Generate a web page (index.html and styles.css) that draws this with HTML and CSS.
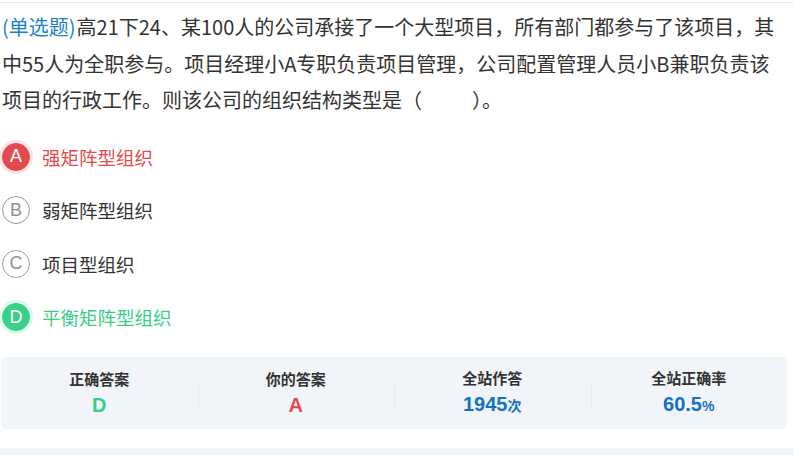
FILE: index.html
```html
<!DOCTYPE html>
<html lang="zh-CN">
<head>
<meta charset="utf-8">
<link rel="stylesheet" href="styles.css">
</head>
<body>
<div class="topline"></div>
<p class="question"><span class="qtype">(单选题)</span><span class="qbody">高21下24、某100人的公司承接了一个大型项目，所有部门都参与了该项目，其中55人为全职参与。项目经理小A专职负责项目管理，公司配置管理人员小B兼职负责该项目的行政工作。则该公司的组织结构类型是（&emsp;&emsp;&ensp;）。</span></p>
<div class="options">
  <div class="option wrong"><span class="badge">A</span><span class="otext">强矩阵型组织</span></div>
  <div class="option"><span class="badge">B</span><span class="otext">弱矩阵型组织</span></div>
  <div class="option"><span class="badge">C</span><span class="otext">项目型组织</span></div>
  <div class="option right"><span class="badge">D</span><span class="otext">平衡矩阵型组织</span></div>
</div>
<div class="stats">
  <div class="stat"><div class="label">正确答案</div><div class="value green">D</div></div>
  <div class="stat"><div class="label">你的答案</div><div class="value red">A</div></div>
  <div class="stat"><div class="label">全站作答</div><div class="value blue">1945<small>次</small></div></div>
  <div class="stat"><div class="label">全站正确率</div><div class="value blue">60.5<small>%</small></div></div>
</div>
<div class="nextbox"></div>
</body>
</html>
```
FILE: styles.css
```css
html, body {
  margin: 0;
  padding: 0;
  background: #fff;
}
body {
  font-family: "Microsoft YaHei", "Noto Sans CJK SC", "Noto Sans", sans-serif;
  color: #333;
  width: 794px;
  overflow: hidden;
}
.topline {
  height: 1px;
  margin-top: 2px;
  background: #e8e8e8;
}
.question {
  margin: 0;
  padding: 6px 18px 0 2px;
  font-size: 20px;
  line-height: 36.5px;
  color: #333;
}
.qtype {
  color: #1a7fd0;
  margin-right: 1px;
}
.options {
  display: flex;
  flex-direction: column;
  gap: 23.5px;
  margin-top: 23px;
}
.option {
  display: flex;
  align-items: center;
  height: 30px;
  gap: 12px;
  padding-left: 2px;
  font-size: 18.5px;
  color: #333;
}
.badge {
  width: 26px;
  height: 26px;
  border: 1px solid #9096ae;
  border-radius: 50%;
  display: flex;
  align-items: center;
  justify-content: center;
  font-family: "Liberation Sans", Arial, sans-serif;
  font-size: 18px;
  color: #8a90a8;
  box-sizing: content-box;
}
.option.wrong { color: #e5484d; }
.option.wrong .badge {
  background: #e24b4e;
  border-color: #e24b4e;
  color: #fff;
  box-shadow: 0 0 0 3px #fbe3e3;
}
.option.right { color: #36cf86; }
.option.right .badge {
  background: #38d08a;
  border-color: #38d08a;
  color: #fff;
  box-shadow: 0 0 0 3px #e0f7ec;
}
.stats {
  margin: 25px 7px 0 1px;
  height: 72px;
  background: #f1f4f8;
  border-radius: 5px;
  display: grid;
  grid-template-columns: repeat(4, 1fr);
  align-items: center;
}
.stat {
  text-align: center;
  background: linear-gradient(#e7eaef, #e7eaef) left 60% / 1px 26px no-repeat;
}
.stat:first-child { background: none; }
.label {
  font-size: 15px;
  font-weight: bold;
  color: #333;
  line-height: 22px;
}
.value {
  font-size: 20px;
  font-weight: bold;
  line-height: 26px;
  margin-top: 2px;
  font-family: "Liberation Sans", Arial, "Noto Sans CJK SC", sans-serif;
}
.value small {
  font-size: 14px;
}
.green { color: #36cf86; }
.red { color: #e24b4e; }
.blue { color: #1572c2; }
.nextbox {
  margin-top: 19px;
  height: 20px;
  background: #f1f4f8;
}
```
